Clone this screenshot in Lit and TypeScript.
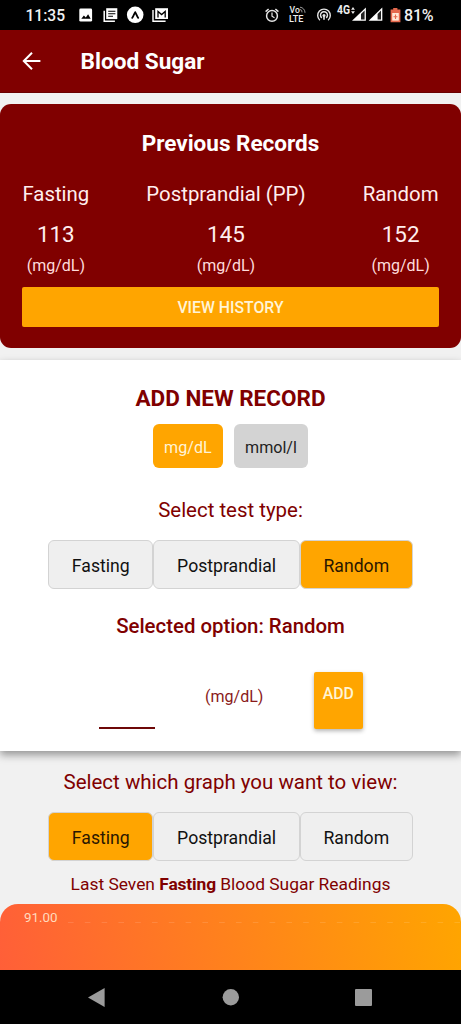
import { LitElement, html, css } from "lit";
import { customElement, state, property } from "lit/decorators.js";
import { classMap } from "lit/directives/class-map.js";

const TYPES = ["Fasting", "Postprandial", "Random"];

@customElement("status-bar")
class StatusBar extends LitElement {
  static styles = css`
    :host { display: flex; justify-content: space-between; height: 30px; background: #000; color: #f2f2f2; padding: 0 27px 0 25.5px; box-sizing: border-box; }
    .group { display: flex; align-items: center; height: 30px; }
    svg { display: block; flex: none; }
    .time { font-size: 15.6px; font-weight: 500; line-height: 30px; width: 53.5px; padding-top: 1px; }
    .pct { font-size: 16px; font-weight: 500; line-height: 30px; width: 30px; padding-top: 1px; letter-spacing: -.2px; }
  `;
  render() {
    return html`
      <div class="group">
        <span class="time">11:35</span>
        <svg width="92" height="30" viewBox="79 0 92 30">
          <rect x="79.3" y="8.6" width="12.8" height="13" rx="1.4" fill="#fff"/>
          <path d="M81.3 18.8l2.6-3.4 1.9 2.2 2.3-3.3 2.6 4.5z" fill="#000"/>
          <path d="M106.2 8.2h11.1v10.9h-11.1z" fill="#fff"/>
          <path d="M108.2 11.2h7.2M108.2 13.7h7.2M108.2 16.2h4.8" stroke="#000" stroke-width="1.1"/>
          <path d="M104.2 10.8v10.4h10.7" fill="none" stroke="#fff" stroke-width="1.5"/>
          <circle cx="135.2" cy="14.8" r="8.3" fill="#fff"/>
          <path d="M132.2 17.8c1.4-1.5 1.9-3.9 3-5.7 1.1 1.8 1.6 4.2 3 5.7" fill="none" stroke="#000" stroke-width="1.8" stroke-linecap="round" stroke-linejoin="round"/>
          <path d="M155.2 8.2h12.8v10.8h-12.8z" fill="#fff"/>
          <path d="M158 17.6v-6.2l3.6 3.2 3.6-3.2v6.2" fill="none" stroke="#000" stroke-width="1.3"/>
          <path d="M153 10v11.2h12.6" fill="none" stroke="#fff" stroke-width="1.4"/>
        </svg>
      </div>
      <div class="group">
        <svg width="140" height="30" viewBox="264 0 140 30">
          <g fill="none" stroke="#e6e6e6" stroke-width="1.5">
            <circle cx="272" cy="15.9" r="5.4"/>
            <path d="M272 12.6v3.6l2.5 1.5" stroke-width="1.2"/>
            <path d="M265.6 11.6l3-2.6M278.4 11.6l-3-2.6"/>
            <path d="M319.9 20.2a6.3 6.3 0 1 1 8.2 0M321.8 17.9a3.5 3.5 0 1 1 4.4 0" stroke-width="1.4"/>
            <path d="M302 12.4a2.6 2.6 0 0 0-2.2-3M305 12.8a5.4 5.4 0 0 0-5-5.6" stroke-width=".9" stroke="#aaa"/>
          </g>
          <circle cx="324" cy="15.6" r="1.5" fill="#e6e6e6"/>
          <path d="M323.2 16h1.6v3.8h-1.6z" fill="#e6e6e6"/>
          <g fill="#eee" font-family="Roboto, sans-serif" font-weight="700">
            <text x="289.6" y="12.9" font-size="8.6" font-weight="500">Vo</text>
            <text x="289" y="22.2" font-size="8.8" textLength="14.4" lengthAdjust="spacingAndGlyphs" font-weight="500">LTE</text>
            <text x="337" y="14.2" font-size="12" textLength="13" lengthAdjust="spacingAndGlyphs">4G</text>
          </g>
          <path d="M353 7l1.9 2.8h-3.8zM353 14l1.9-2.8h-3.8z" fill="#eee"/>
          <path d="M352 20.8L365.9 7.4v13.4z" fill="#fff"/><path d="M361 14l3.6-3.5v9h-3.6z" fill="#222"/>
          <path d="M368.6 20.8L382.3 7.4v13.4z" fill="#fff"/><path d="M377.6 14l3.4-3.4v8.9h-3.4z" fill="#222"/>
          <path d="M393.2 8h4.2v1.6h3v12.6h-9.8V9.6h2.6z" fill="#e5694d"/>
          <path d="M392.2 13h6.6v7.6h-6.6z" fill="#ffe9d8"/>
          <path d="M395.5 14.6v4.4M393.5 16.8h4" stroke="#e5694d" stroke-width="1.1"/>
        </svg>
        <span class="pct">81%</span>
      </div>
    `;
  }
}

@customElement("type-picker")
class TypePicker extends LitElement {
  @property() value = "";
  static styles = css`
    :host { display: flex; justify-content: center; }
    button { font: 400 17.65px/47px Roboto, sans-serif; height: 49px; box-sizing: border-box; border: 1px solid #d3d3d3; border-radius: 6px; background: #efefef; color: #111; padding: 2px 22.7px 0; text-align: center; }
    .on { background: #ffa500; color: #2b1700; }
  `;
  render() {
    return TYPES.map(t => html`<button class=${classMap({ on: t === this.value })}
      @click=${() => this.dispatchEvent(new CustomEvent("pick", { detail: t }))}>${t}</button>`);
  }
}

@customElement("app-root")
class AppRoot extends LitElement {
  @state() private test = "Random";
  @state() private graph = "Fasting";
  private records = [["Fasting", 113], ["Postprandial (PP)", 145], ["Random", 152]];

  static styles = css`
    :host { display: flex; flex-direction: column; height: 1024px; overflow: hidden; background: #f1f1f1; font-family: Roboto, sans-serif; color: #800000; }
    * { box-sizing: border-box; }
    .bar { height: 63px; flex: none; background: #800000; border-bottom: 1px solid #6a0000; color: #fff; display: flex; align-items: center; padding-left: 21.5px; }
    .bar svg { margin-right: 39px; }
    .bar h1 { margin: 0; padding-top: 2px; font-size: 22.6px; font-weight: 700; line-height: 30px; }
    .card { flex: none; margin-top: 11px; height: 244px; background: #800000; border-radius: 11px; color: #fff; padding: 24px 22.4px 22px; display: flex; flex-direction: column; }
    .card h2 { margin: 0 0 24px; font-size: 22.5px; line-height: 30px; font-weight: 700; text-align: center; }
    .records { display: flex; justify-content: space-between; }
    .record { display: flex; flex-direction: column; align-items: center; }
    .label { font-size: 20.4px; line-height: 24px; color: #ffeeee; }
    .num { font-size: 22.4px; line-height: 28px; margin-top: 14px; color: #ffeeee; }
    .unit { font-size: 16px; line-height: 20px; margin-top: 8px; color: #ffdcdc; }
    .history { height: 40px; margin-top: 11px; border: 0; border-radius: 2px; background: #ffa500; color: #fff4d6; font: 500 15.8px/40px Roboto, sans-serif; padding: 1px 0 0; flex: none; }
    .form { flex: none; margin-top: 12px; height: 391px; background: #fff; box-shadow: 0 4px 8px rgba(0,0,0,.38); display: flex; flex-direction: column; align-items: center; }
    .form h2 { margin: 23px 0 0; font-size: 22.5px; line-height: 30px; font-weight: 700; }
    .units { display: flex; gap: 11px; margin-top: 11px; }
    .units button { border: 0; height: 44px; border-radius: 6px; background: #d3d3d3; color: #222; font: 400 16.1px/46px Roboto, sans-serif; padding: 1px 11.2px 0; }
    .units .on { background: #ffa500; color: #fff4d6; }
    .prompt { font-size: 20.45px; line-height: 26px; margin: 29px 0 17px; }
    .selected { font-size: 20.4px; line-height: 26px; font-weight: 500; margin-top: 24px; }
    .entry { align-self: stretch; display: flex; margin-top: 33px; padding: 0 98px 0 98.5px; justify-content: space-between; }
    .field { width: 56.5px; height: 57px; border-bottom: 2px solid #6e0808; }
    .entry .unit { color: #8a1a1a; margin-top: 15px; }
    .add { width: 49.5px; height: 57px; border-radius: 2px; background: #ffa500; box-shadow: 0 2px 4px rgba(0,0,0,.3); color: #fff4d6; font-weight: 500; font-size: 15.8px; line-height: 20px; padding-top: 12px; text-align: center; }
    .graph { font-size: 20.5px; line-height: 26px; margin: 18px 0 17px; text-align: center; flex: none; }
    .caption { font-size: 17.4px; line-height: 22px; margin: 12px 0 9px; text-align: center; flex: none; }
    .caption b { letter-spacing: -.15px; }
    .chart { flex: none; height: 66px; background: linear-gradient(82deg, #ff5f38, #ffa500); border-radius: 18px 18px 0 0; overflow: hidden; }
    .chart svg { display: block; }
    .nav { height: 54px; flex: none; background: #000; }
    .nav svg { display: block; }
  `;

  render() {
    return html`
      <status-bar></status-bar>
      <header class="bar">
        <svg width="20" height="20" viewBox="0 0 20 20" fill="none" stroke="#fff" stroke-width="2"><path d="M18.4 10H2.5M10 1.8L1.8 10l8.2 8.2"/></svg>
        <h1>Blood Sugar</h1>
      </header>
      <section class="card">
        <h2>Previous Records</h2>
        <div class="records">
          ${this.records.map(([n, v]) => html`<div class="record"><span class="label">${n}</span><span class="num">${v}</span><span class="unit">(mg/dL)</span></div>`)}
        </div>
        <button class="history">VIEW HISTORY</button>
      </section>
      <section class="form">
        <h2>ADD NEW RECORD</h2>
        <div class="units"><button class="on">mg/dL</button><button>mmol/l</button></div>
        <div class="prompt">Select test type:</div>
        <type-picker .value=${this.test} @pick=${(e: CustomEvent) => (this.test = e.detail)}></type-picker>
        <div class="selected">Selected option: ${this.test}</div>
        <div class="entry"><div class="field"></div><span class="unit">(mg/dL)</span><div class="add">ADD</div></div>
      </section>
      <div class="graph">Select which graph you want to view:</div>
      <type-picker .value=${this.graph} @pick=${(e: CustomEvent) => (this.graph = e.detail)}></type-picker>
      <div class="caption">Last Seven <b>${this.graph}</b> Blood Sugar Readings</div>
      <div class="chart">
        <svg width="461" height="66" viewBox="0 0 461 66">
          <text x="24" y="18" font-size="13.4" fill="#ffd9bd" font-family="Roboto, sans-serif">91.00</text>
          <path d="M68 18.5H461" stroke="#fff" stroke-opacity=".12" stroke-dasharray="5.6 11.2"/>
        </svg>
      </div>
      <nav class="nav">
        <svg width="461" height="54" viewBox="0 0 461 54" fill="#9b9b9b">
          <path d="M88 27.5L104.6 18v19z"/><circle cx="230.8" cy="27.3" r="8.2"/><rect x="355" y="19" width="17" height="17" rx="1"/>
        </svg>
      </nav>
    `;
  }
}
